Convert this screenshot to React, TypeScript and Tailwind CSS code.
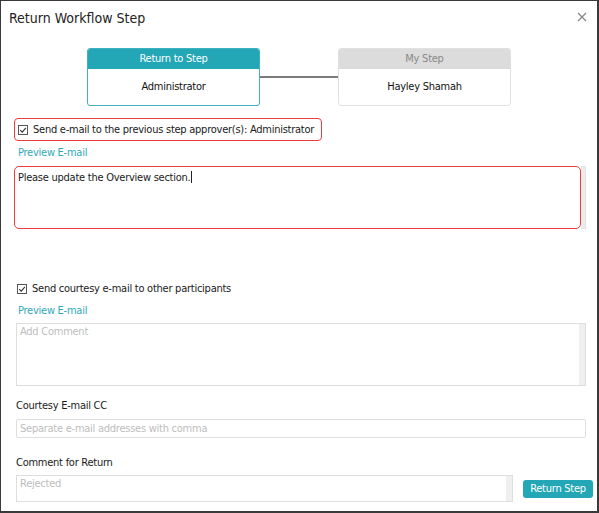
import React from "react";

const font = { fontFamily: '"DejaVu Sans Condensed", "DejaVu Sans", sans-serif' };

function Check() {
  return (
    <span className="inline-flex h-[10px] w-[10px] shrink-0 items-center justify-center border border-[#555] bg-white">
      <svg width="8" height="8" viewBox="0 0 8 8">
        <path d="M1.2 4.2 L3.2 6.1 L6.9 1.8" fill="none" stroke="#333" strokeWidth="1.1" />
      </svg>
    </span>
  );
}

export default function App() {
  return (
    <div
      className="relative h-[513px] w-[599px] border-l border-t border-r-2 border-b-2 border-[#3a3a3a] bg-white text-[11px] leading-[14px] tracking-[-0.25px] text-[#1a1a1a]"
      style={font}
    >
      <div className="flex items-start justify-between pl-[8px] pr-[10px] pt-[8px]">
        <div className="text-[14px] leading-[18px] tracking-normal text-[#222]">Return Workflow Step</div>
        <svg width="10" height="10" viewBox="0 0 10 10" className="mt-[3px]">
          <path d="M1 1 L9 9 M9 1 L1 9" stroke="#888" strokeWidth="1.3" />
        </svg>
      </div>

      <div className="mt-[21px] flex items-center pl-[86px]">
        <div className="flex h-[58px] w-[173px] flex-col overflow-hidden rounded-[3px] border border-[#3fb2c0]">
          <div className="flex h-[20px] items-center justify-center bg-[#23a6b6] text-white">Return to Step</div>
          <div className="flex flex-1 items-center justify-center text-[#111]">Administrator</div>
        </div>
        <div className="h-[2px] w-[78px] bg-[#7a7a7a]" />
        <div className="flex h-[58px] w-[173px] flex-col overflow-hidden rounded-[3px] border border-[#e0e0e0]">
          <div className="flex h-[20px] items-center justify-center bg-[#dcdcdc] text-[#888]">My Step</div>
          <div className="flex flex-1 items-center justify-center text-[#111]">Hayley Shamah</div>
        </div>
      </div>

      <div className="pl-[13px]">
        <div className="mt-[12px] flex h-[23px] w-[308px] items-center gap-[5px] rounded-[4px] border-[1.5px] border-[#ee3b3b] pl-[3px]">
          <Check />
          <span>Send e-mail to the previous step approver(s): Administrator</span>
        </div>
        <div className="mt-[5px] pl-[4px] text-[#2fa8ba]">Preview E-mail</div>
        <div className="mt-[6px] flex h-[63px] w-[572px]">
          <div className="flex-1 rounded-[5px] border-[1.5px] border-[#f03c3c] px-[3px] pt-[2px]">
            Please update the Overview section.<span className="ml-[1px] inline-block h-[12px] w-px translate-y-[2px] bg-[#222]" />
          </div>
          <div className="w-[5px] border-y border-r border-[#e2e2e2] bg-[#ececec]" />
        </div>

        <div className="mt-[53px] flex items-center gap-[5px] pl-[3px]">
          <Check />
          <span>Send courtesy e-mail to other participants</span>
        </div>
        <div className="mt-[8px] pl-[4px] text-[#2fa8ba]">Preview E-mail</div>
        <div className="mt-[5px] ml-[2px] flex h-[63px] w-[570px] border border-[#dedede]">
          <div className="flex-1 px-[3px] pt-[1px] text-[#bdbdbd]">Add Comment</div>
          <div className="w-[6px] bg-[#efefef]" />
        </div>

        <div className="mt-[13px] pl-[2px]">Courtesy E-mail CC</div>
        <div className="mt-[6px] ml-[2px] flex h-[19px] w-[570px] items-center rounded-[2px] border border-[#dedede] px-[3px] text-[#bdbdbd]">
          Separate e-mail addresses with comma
        </div>

        <div className="mt-[18px] pl-[2px]">Comment for Return</div>
        <div className="mt-[5px] ml-[2px] flex items-center gap-[10px]">
          <div className="flex h-[27px] w-[497px] shrink-0 border border-[#dedede]">
            <div className="flex-1 px-[3px] pt-[1px] text-[#bdbdbd]">Rejected</div>
            <div className="w-[6px] bg-[#efefef]" />
          </div>
          <div className="flex h-[18px] w-[70px] shrink-0 items-center justify-center rounded-[3px] bg-[#23a6b6] text-white">
            Return Step
          </div>
        </div>
      </div>
    </div>
  );
}
